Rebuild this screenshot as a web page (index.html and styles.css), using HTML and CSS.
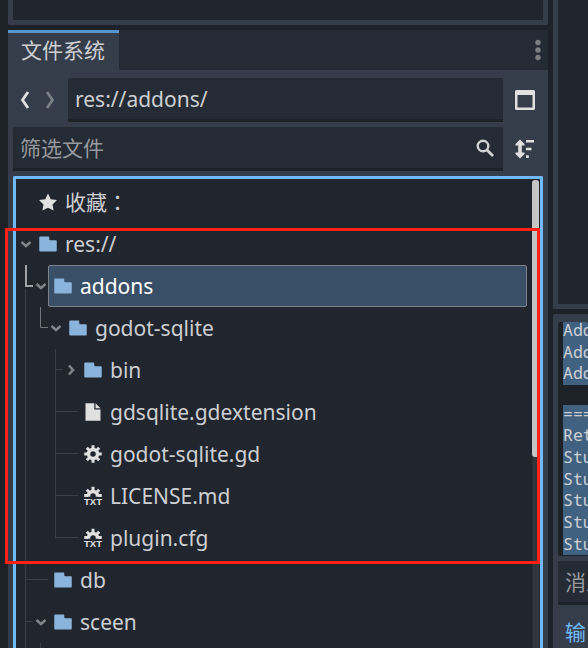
FILE: index.html
```html
<!DOCTYPE html>
<html lang="zh-CN">
<head>
<meta charset="utf-8">
<title>文件系统</title>
<link rel="stylesheet" href="styles.css">
</head>
<body>
<svg class="defs" width="0" height="0" aria-hidden="true">
  <symbol id="folder" viewBox="0 0 16 16"><path fill="#8ab4dc" d="M1.600 2A.6.6 0 0 0 1 2.600v10.800a.6.6 0 0 0 .6.6h12.800a.6.6 0 0 0 .6-.6V5.600a.6.6 0 0 0-.6-.6H10a1 1 0 0 1-1-1V2.600a.6.6 0 0 0-.6-.6z"/></symbol>
  <symbol id="file" viewBox="0 0 16 16"><path fill="#e0e0e0" d="M2 1v14h12V6H9V1zm8 0v4h4z"/></symbol>
  <symbol id="star" viewBox="0 0 16 16"><path fill="#e0e0e0" d="M8 1.200 10.200 5.700 15.200 6.400 11.600 9.900 12.500 14.800 8 12.500 3.500 14.800 4.400 9.900.8 6.400 5.800 5.700z"/></symbol>
  <symbol id="gear" viewBox="0 0 16 16"><g stroke="#e0e0e0"><circle cx="8" cy="8" r="3.600" fill="none" stroke-width="2.800"/><path stroke-width="2.400" d="M8 1v2.500M8 12.500V15M1 8h2.500M12.500 8H15M3.050 3.050l1.800 1.800M11.150 11.150l1.800 1.800M12.950 3.050l-1.800 1.800M4.850 11.150l-1.800 1.800"/></g></symbol>
  <symbol id="half-gear" viewBox="0 0 16 16"><g stroke="#e0e0e0"><path fill="none" stroke-width="2.800" d="M4.400 8.600V8a3.600 3.600 0 0 1 7.200 0v.6"/><path stroke-width="2.400" d="M8 .6v2.900M1 7.500h3M12 7.500h3M3.050 3.050l1.800 1.800M12.950 3.050l-1.800 1.800"/></g></symbol>
  <symbol id="down" viewBox="0 0 12 12"><path fill="none" stroke="#81848a" stroke-width="2.500" d="M1.500 4 6 8l4.500-4"/></symbol>
  <symbol id="right" viewBox="0 0 12 12"><path fill="none" stroke="#81848a" stroke-width="2.500" d="M4 1.500 8 6l-4 4.500"/></symbol>
</svg>
<div class="editor">
  <div class="left">
    <div class="upper-dock"></div>
    <section class="dock">
      <header class="tabs">
        <div class="tab">文件系统</div>
        <svg class="more" width="6" height="22" viewBox="0 0 6 22"><g fill="#7b7e83"><circle cx="3" cy="3.500" r="2.700"/><circle cx="3" cy="11" r="2.700"/><circle cx="3" cy="18.500" r="2.700"/></g></svg>
      </header>
      <div class="bar path-bar">
        <svg class="history" width="50" height="30" viewBox="0 0 50 30" fill="none" stroke-width="2.800"><path stroke="#e0e0e0" d="M15 7 9.500 15l5.500 8"/><path stroke="#7b7f87" d="M34 7l5.500 8-5.500 8"/></svg>
        <div class="input path">res://addons/</div>
        <svg class="action" width="40" height="40" viewBox="0 0 40 40"><path fill="#e0e0e0" fill-rule="evenodd" d="M13.500 10h17a1.500 1.500 0 0 1 1.500 1.500v17a1.500 1.500 0 0 1-1.500 1.500h-17a1.500 1.500 0 0 1-1.500-1.500v-17a1.500 1.500 0 0 1 1.500-1.500zM14.500 15v12.500h15V15z"/></svg>
      </div>
      <div class="bar">
        <div class="input filter"><span>筛选文件</span><svg width="20" height="20" viewBox="0 0 20 20" fill="none" stroke="#d0d1d2"><circle cx="8" cy="8" r="5.300" stroke-width="2.400"/><path stroke-width="2.800" d="M11.500 11.500 18 18"/></svg></div>
        <svg class="action" width="40" height="40" viewBox="0 0 40 40"><path fill="#e0e0e0" d="M17 10.500l4.500 4.500v1.500h-2.700v7h2.700V25L17 29.500 12.500 25v-1.500h2.700v-7h-2.700V15zM23 11h8v2.500h-8zM23 18.700h5.500v2.500H23zM23 26.300h2.800V29H23z"/></svg>
      </div>
      <div class="tree">
        <div class="row d0"><i class="twist"></i><svg class="icon"><use href="#star"/></svg><span>收藏<span class="colon" lang="zh-TW">：</span></span></div>
        <div class="row d0"><svg class="twist"><use href="#down"/></svg><svg class="icon"><use href="#folder"/></svg><span>res://</span></div>
        <div class="row d1"><svg class="twist"><use href="#down"/></svg><div class="selected"><svg class="icon"><use href="#folder"/></svg><span>addons</span></div></div>
        <div class="row d2"><svg class="twist"><use href="#down"/></svg><svg class="icon"><use href="#folder"/></svg><span>godot-sqlite</span></div>
        <div class="row d3"><svg class="twist"><use href="#right"/></svg><svg class="icon"><use href="#folder"/></svg><span>bin</span></div>
        <div class="row d3"><i class="twist"></i><svg class="icon"><use href="#file"/></svg><span>gdsqlite.gdextension</span></div>
        <div class="row d3"><i class="twist"></i><svg class="icon"><use href="#gear"/></svg><span>godot-sqlite.gd</span></div>
        <div class="row d3"><i class="twist"></i><svg class="icon" viewBox="0 0 20 20"><use href="#half-gear" width="20" height="20"/><text class="badge" x="1" y="19" textLength="18" lengthAdjust="spacingAndGlyphs">TXT</text></svg><span>LICENSE.md</span></div>
        <div class="row d3"><i class="twist"></i><svg class="icon" viewBox="0 0 20 20"><use href="#half-gear" width="20" height="20"/><text class="badge" x="1" y="19" textLength="18" lengthAdjust="spacingAndGlyphs">TXT</text></svg><span>plugin.cfg</span></div>
        <div class="row d1"><i class="twist"></i><svg class="icon"><use href="#folder"/></svg><span>db</span></div>
        <div class="row d1"><svg class="twist"><use href="#down"/></svg><svg class="icon"><use href="#folder"/></svg><span>sceen</span></div>
        <svg class="guides" width="80" height="469" viewBox="16 179 80 469" fill="none"><path stroke="#3b3f47" d="M25.500 289v359M26 579.500h22M26 621.500h7M40.500 643v5M55.500 349v189.500M55 369.500h8M55 411.500h23M55 453.500h23M55 495.500h23M55 537.500h23"/><path stroke="#71747a" d="M40.500 307v20.500H48"/><path stroke="#a0a2a5" stroke-width="2" d="M26 265v21h7"/></svg>
        <div class="scroll"><div class="thumb"></div></div>
      </div>
    </section>
  </div>
  <div class="right">
    <div class="viewport"></div>
    <section class="output">
      <div class="log"><div class="sel first"><p>Add</p><p>Add</p><p>Add</p></div><div class="sel second"><p>===</p><p>Ret</p><p>Stu</p><p>Stu</p><p>Stu</p><p>Stu</p><p>Stu</p></div></div>
      <div class="message">消息</div>
      <div class="output-tab">输</div>
    </section>
  </div>
</div>
<div class="highlight"></div>
</body>
</html>
```

FILE: styles.css
```css
* { box-sizing: border-box; }
body {
  margin: 0;
  width: 588px;
  height: 648px;
  overflow: hidden;
  background: #1d2229;
  color: #cdcfd2;
  font: 21px/30px "Noto Sans", "Noto Sans CJK SC", sans-serif;
}
svg { display: block; flex: none; }
.defs { position: absolute; }
.editor { display: flex; gap: 5px; height: 648px; padding-left: 8px; }
.left { width: 540px; flex: none; display: flex; flex-direction: column; gap: 5px; }
.upper-dock {
  height: 25px;
  flex: none;
  background: #21252e;
  border: 5px solid #363d4a;
  border-top: 0;
  border-radius: 0 0 2px 2px;
}
.dock { flex: 1; min-height: 0; background: #363d4a; display: flex; flex-direction: column; }
.tabs {
  height: 40px;
  flex: none;
  background: #252b34;
  display: flex;
  justify-content: space-between;
  align-items: center;
  padding-right: 7px;
}
.tab {
  width: 111px;
  height: 40px;
  padding: 2px 0 0 13px;
  border-top: 3px solid #5796cc;
  background: #363d4a;
}
.bar { display: flex; flex: none; height: 44px; margin: 0 0 5px 5px; }
.path-bar { margin-top: 8px; }
.history { width: 55px; padding-right: 5px; margin-top: 7px; }
.input {
  background: #252b34;
  border-bottom: 3px solid #1d2229;
  border-radius: 2px 2px 0 0;
  padding: 6px 8px 0 7px;
}
.path { width: 435px; }
.filter {
  width: 490px;
  color: #96999e;
  display: flex;
  justify-content: space-between;
}
.filter svg { margin-top: 5px; }
.action { margin-top: 2px; }
.tree {
  position: relative;
  flex: 1;
  min-height: 0;
  width: 530px;
  margin-left: 5px;
  padding: 2px 13px 0 4px;
  border: 3px solid #70bafa;
  border-bottom: 0;
  border-radius: 2px 2px 0 0;
  background: #21252e;
  overflow: hidden;
}
.row { height: 42px; display: flex; align-items: center; }
.d1 { padding-left: 15px; }
.d2 { padding-left: 30px; }
.d3 { padding-left: 45px; }
.twist { width: 12px; height: 12px; flex: none; }
.icon { width: 20px; height: 20px; margin: 0 7px 0 6px; }
.row > span { white-space: nowrap; }
.colon { font-family: "Noto Sans CJK TC", sans-serif; line-height: 1; }
.badge { font: bold 9.500px "Liberation Sans", sans-serif; fill: #e0e0e0; }
.selected {
  display: flex;
  align-items: center;
  height: 42px;
  flex: 1;
  margin-left: 1px;
  padding-left: 4px;
  border: 1px solid #7c8289;
  border-radius: 2px;
  background: #394f67;
  color: #fff;
}
.selected .icon { margin-left: 0; }
.guides { position: absolute; left: 0; top: 0; }
.scroll { position: absolute; top: 1px; right: 1px; width: 7px; height: 468px; border-left: 1px solid #2a2e36; background: #32363e; }
.thumb { width: 7px; height: 277px; margin-left: -1px; border-radius: 3px; background: #c5c5c6; }
.right { width: 35px; flex: none; overflow: hidden; display: flex; flex-direction: column; gap: 5px; }
.viewport {
  height: 309px;
  flex: none;
  border: solid #363d4a;
  border-width: 0 0 5px 5px;
  background: #21252e;
  border-radius: 0 0 0 2px;
}
.output {
  flex: 1;
  padding: 8px 0 0 5px;
  background: #363d4a;
  border-radius: 2px 0 0 0;
}
.log {
  height: 234px;
  padding-left: 5px;
  overflow: hidden;
  background: #1d2229;
  border-radius: 2px;
  font: 16.500px/21.700px "Noto Sans Mono", "DejaVu Sans Mono", monospace;
}
.log p { margin: 0; white-space: nowrap; }
.sel { background: #416181; overflow: hidden; }
.first { height: 63px; margin-bottom: 20px; }
.first p:first-child { margin-top: -3px; }
.second { height: 150px; }
.second p:first-child { margin-top: -2.500px; }
.message {
  height: 44px;
  margin-top: 5px;
  padding: 6px 0 0 7px;
  background: #252b34;
  border-bottom: 3px solid #1d2229;
  color: #96999e;
  white-space: nowrap;
}
.output-tab { padding: 12px 0 0 7px; color: #70bafa; white-space: nowrap; }
.highlight {
  position: absolute;
  left: 5px;
  top: 228px;
  width: 535px;
  height: 336px;
  border: 3px solid #ff2213;
  border-radius: 1px;
}
```
